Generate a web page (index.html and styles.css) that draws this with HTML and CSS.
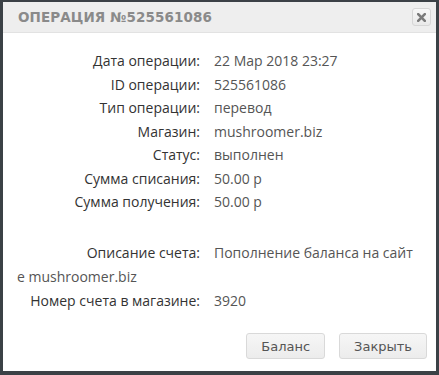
FILE: index.html
```html
<!DOCTYPE html>
<html lang="ru">
<head>
    <meta charset="UTF-8">
    <title>Операция №525561086</title>
    <link rel="stylesheet" href="styles.css">
</head>
<body>
<div class="modal">
    <div class="modal-header">
        <h3 class="modal-title">Операция №525561086</h3>
        <button class="close-btn" title="Закрыть">
            <svg width="9" height="9" viewBox="0 0 9 9">
                <path d="M1.2 1.2 L7.8 7.8 M7.8 1.2 L1.2 7.8" stroke="#7a7a7a" stroke-width="2.6" stroke-linecap="square"/>
            </svg>
        </button>
    </div>

    <div class="modal-body">
        <div class="row"><span class="label">Дата операции:</span>22 Мар 2018 23:27</div>
        <div class="row"><span class="label">ID операции:</span>525561086</div>
        <div class="row"><span class="label">Тип операции:</span>перевод</div>
        <div class="row"><span class="label">Магазин:</span>mushroomer.biz</div>
        <div class="row"><span class="label">Статус:</span>выполнен</div>
        <div class="row"><span class="label">Сумма списания:</span>50.00 р</div>
        <div class="row"><span class="label">Сумма получения:</span>50.00 р</div>

        <div class="row row-desc"><span class="label">Описание счета:</span>Пополнение баланса на сайт</div>
        <div class="row row-wide">е mushroomer.biz</div>
        <div class="row row-wide"><span class="label">Номер счета в магазине:</span>3920</div>
    </div>

    <div class="modal-footer">
        <button class="btn">Баланс</button>
        <button class="btn">Закрыть</button>
    </div>
</div>
</body>
</html>
```

FILE: styles.css
```css
body {
    margin: 0;
    background: #3b4146;
    font-family: "Open Sans", Arial, sans-serif;
}

.modal {
    margin: 2px 3px 0;
    height: 369px;
    background: #fff;
    display: flex;
    flex-direction: column;
}

.modal-header {
    height: 30px;
    background: #eeeeee;
    border-bottom: 1px solid #e2e2e2;
    display: flex;
    align-items: center;
    justify-content: space-between;
    padding: 0 5px 0 15px;
}

.modal-title {
    margin: 0;
    font-family: "DejaVu Sans", Verdana, sans-serif;
    font-size: 13.5px;
    font-weight: bold;
    text-transform: uppercase;
    letter-spacing: 0.1px;
    color: #8a8a8a;
}

.close-btn {
    width: 19px;
    height: 18px;
    padding: 0;
    border: 1px solid #d6d6d6;
    border-radius: 3px;
    background: linear-gradient(#f7f7f7, #e9e9e9);
    display: flex;
    align-items: center;
    justify-content: center;
    cursor: pointer;
}

.modal-body {
    padding: 16px 19px 0 14px;
    font-size: 14px;
    color: #555;
}

.row {
    line-height: 23.5px;
}

.label {
    display: inline-block;
    width: 183px;
    margin-right: 14px;
    text-align: right;
    color: #333;
}

.row-desc {
    margin-top: 27px;
    line-height: 24px;
}

.row-wide {
    line-height: 24px;
}

.modal-footer {
    margin-top: auto;
    padding: 0 9px 12px;
    display: flex;
    justify-content: flex-end;
    gap: 14px;
}

.btn {
    height: 26px;
    padding: 0 14px;
    border: 1px solid #d9d9d9;
    border-radius: 3px;
    background: linear-gradient(#f6f6f6, #ececec);
    font-family: "DejaVu Sans", Verdana, sans-serif;
    font-size: 13px;
    color: #555;
    cursor: pointer;
}
```
